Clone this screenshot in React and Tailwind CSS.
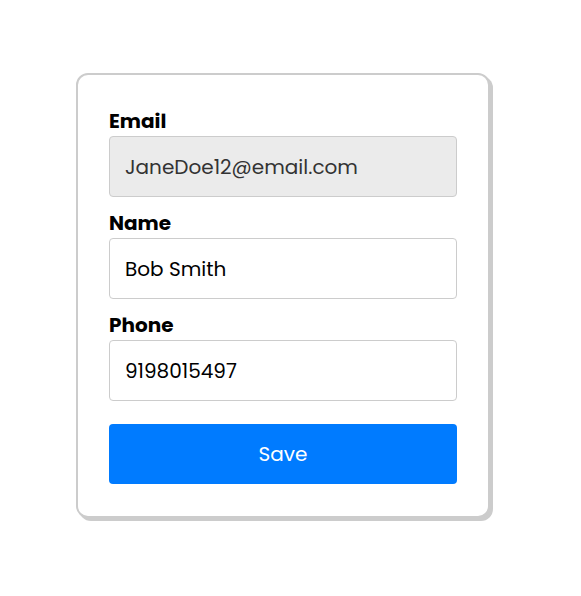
import React from 'react'

const font = { fontFamily: '"Poppins", "Inter", "Liberation Sans", sans-serif' }

function Field({ label, value, disabled, gap }) {
  return (
    <div className={gap}>
      <label className="block text-[20px] leading-[24px] font-bold text-black mb-[3px]">{label}</label>
      <input
        defaultValue={value}
        disabled={disabled}
        className={`block w-full h-[61px] px-[15px] rounded border border-[#cccccc] text-[20px] outline-none ${
          disabled ? 'bg-[#ebebeb] text-[#333333]' : 'bg-white text-black'
        }`}
        style={font}
      />
    </div>
  )
}

export default function App() {
  return (
    <div className="w-[566px] min-h-[596px] bg-white flex justify-center pt-[73px]" style={font}>
      <div className="w-[414px] h-[445px] border-2 border-[#cccccc] rounded-xl shadow-[3px_3px_0_#cccccc] px-[31px] pt-[34px] bg-white">
        <Field label="Email" value="JaneDoe12@email.com" disabled />
        <Field label="Name" value="Bob Smith" gap="mt-[14px]" />
        <Field label="Phone" value="9198015497" gap="mt-[14px]" />
        <button className="mt-[23px] w-full h-[60px] rounded bg-[#007bff] text-white text-[20px]" style={font}>
          Save
        </button>
      </div>
    </div>
  )
}
